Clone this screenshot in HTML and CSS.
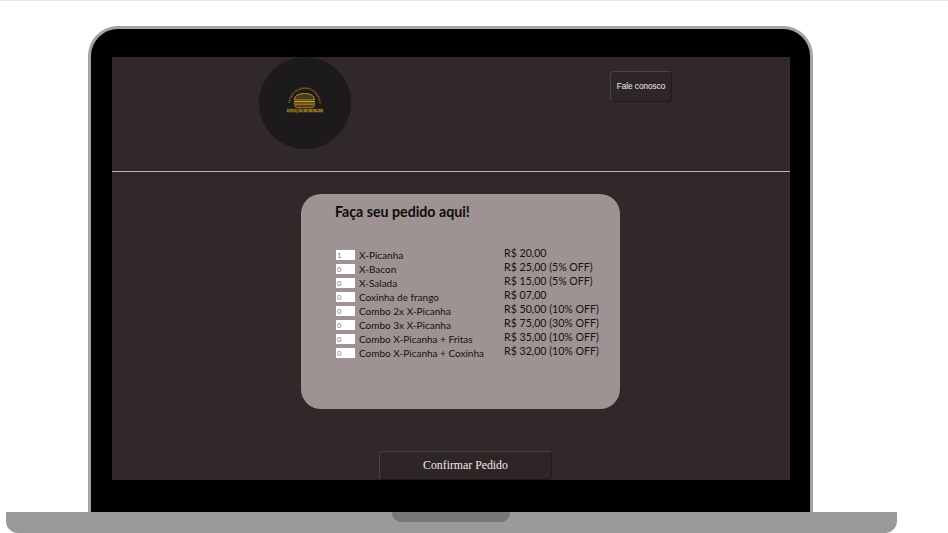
FILE: index.html
```html
<!DOCTYPE html>
<html lang="pt-BR">
<head>
<meta charset="utf-8">
<title>Faça seu pedido</title>
<link rel="stylesheet" href="styles.css">
</head>
<body>
<div class="page">
  <div class="lid">
    <div class="screen">
      <header class="topbar">
        <div class="logo">
          <svg class="logo-art" viewBox="0 0 44 30" width="44" height="30" aria-hidden="true">
            <defs><path id="arc" d="M7 17 A14.5 15 0 0 1 36 17"/></defs>
            <text class="logo-arc"><textPath href="#arc" startOffset="1">ESTAÇÃO DE BURGERS ARTESANAIS</textPath></text>
            <path d="M11.5 13 Q11.5 6.5 21.5 6.5 Q31.5 6.5 31.5 13 Z" fill="#4a3a1c" stroke="#c8962e" stroke-width="0.9"/>
            <rect x="11" y="14" width="21" height="1.4" fill="#c8962e"/>
            <rect x="10.5" y="16" width="22" height="1" fill="#7a5a1c"/>
            <path d="M11.5 17.6 H31.5 Q31.5 20.6 28.5 20.6 H14.5 Q11.5 20.6 11.5 17.6 Z" fill="#4a3a1c" stroke="#c8962e" stroke-width="0.7"/>
            <rect x="3.5" y="21.5" width="37" height="4.5" fill="#3c2e16"/>
            <text class="logo-name" x="22" y="25.2" text-anchor="middle" textLength="36" lengthAdjust="spacingAndGlyphs">ESTAÇÃO DE BURGER</text>
          </svg>
        </div>
        <button class="contact" type="button">Fale conosco</button>
      </header>
      <main class="content">
        <section class="card">
          <h1 class="title">Faça seu pedido aqui!</h1>
          <div class="order">
            <ul class="items">
              <li class="item"><input class="qty" type="text" value="1"><span>X-Picanha</span></li>
              <li class="item"><input class="qty" type="text" value="0"><span>X-Bacon</span></li>
              <li class="item"><input class="qty" type="text" value="0"><span>X-Salada</span></li>
              <li class="item"><input class="qty" type="text" value="0"><span>Coxinha de frango</span></li>
              <li class="item"><input class="qty" type="text" value="0"><span>Combo 2x X-Picanha</span></li>
              <li class="item"><input class="qty" type="text" value="0"><span>Combo 3x X-Picanha</span></li>
              <li class="item"><input class="qty" type="text" value="0"><span>Combo X-Picanha + Fritas</span></li>
              <li class="item"><input class="qty" type="text" value="0"><span>Combo X-Picanha + Coxinha</span></li>
            </ul>
            <ul class="prices">
              <li>R$ 20,00</li>
              <li>R$ 25,00 (5% OFF)</li>
              <li>R$ 15,00 (5% OFF)</li>
              <li>R$ 07,00</li>
              <li>R$ 50,00 (10% OFF)</li>
              <li>R$ 75,00 (30% OFF)</li>
              <li>R$ 35,00 (10% OFF)</li>
              <li>R$ 32,00 (10% OFF)</li>
            </ul>
          </div>
        </section>
        <button class="confirm" type="button">Confirmar Pedido</button>
      </main>
    </div>
  </div>
  <div class="base"><div class="notch"></div></div>
</div>
</body>
</html>
```
FILE: styles.css
```css
* { box-sizing: border-box; }
html, body { margin: 0; padding: 0; background: #fff; }
.page {
  width: 948px;
  height: 533px;
  overflow: hidden;
  padding-top: 25px;
  border-top: 1px solid #e6e6e6;
  display: flex;
  flex-direction: column;
}
.lid {
  width: 725px;
  height: 486px;
  margin-left: 88px;
  padding: 28px 21px 32px 21px;
  background: #000;
  border: 3px solid #a3a3a3;
  border-bottom: 0;
  border-radius: 30px 30px 0 0;
}
.screen {
  width: 678px;
  height: 423px;
  background: #312829;
  display: flex;
  flex-direction: column;
  overflow: hidden;
}
.topbar {
  height: 115px;
  flex: none;
  border-bottom: 1px solid #b9b2b2;
  display: flex;
  align-items: flex-start;
  padding-left: 147px;
}
.logo {
  width: 92px;
  height: 92px;
  flex: none;
  border-radius: 50%;
  background: #1c1a1b;
  display: flex;
  align-items: center;
  justify-content: center;
}
.logo-art { display: block; margin-top: -2px; }
.logo-arc { font: 700 2.4px "Liberation Sans", sans-serif; fill: #b98a2a; }
.logo-name { font: 700 3.6px "Liberation Serif", serif; fill: #d9a63a; }
.contact {
  width: 62px;
  height: 31px;
  margin: 14px 0 0 259px;
  padding: 0;
  flex: none;
  background: #2e2526;
  color: #f0eded;
  border: 1px solid #4d4344;
  border-bottom-color: #201a1b;
  border-right-color: #201a1b;
  border-radius: 4px;
  font: 8.2px "Liberation Sans", Arial, sans-serif;
}
.content {
  flex: 1;
  display: flex;
  flex-direction: column;
  align-items: flex-start;
}
.card {
  width: 319px;
  height: 215px;
  margin: 22px 0 0 189px;
  padding: 8px 0 0 34px;
  background: #9e9392;
  border-radius: 20px;
  color: #0c0c0c;
  font-family: "Comic Sans MS", "Lato", sans-serif;
}
.title {
  margin: 0 0 24px;
  font-size: 14.2px;
  line-height: 20px;
  font-weight: 700;
}
.order {
  display: flex;
  align-items: flex-start;
}
.items, .prices {
  list-style: none;
  margin: 0;
  padding: 0;
  line-height: 14px;
}
.items { width: 169px; margin-top: 2px; color: #141112; font-size: 10px; }
.item {
  display: flex;
  align-items: center;
  gap: 4px;
  height: 14px;
  padding-left: 1px;
  white-space: nowrap;
}
.qty {
  width: 19px;
  height: 10px;
  flex: none;
  padding: 0 0 0 1px;
  border: 0;
  background: #fff;
  color: #777;
  font: 8px "Liberation Sans", Arial, sans-serif;
}
.prices { color: #141112; white-space: nowrap; font-size: 10.6px; }
.confirm {
  width: 173px;
  height: 29px;
  margin: 42px 0 0 267px;
  padding: 0;
  flex: none;
  background: #2e2526;
  color: #eeeaea;
  border: 1px solid #4d4344;
  border-bottom-color: #201a1b;
  border-right-color: #201a1b;
  border-radius: 4px;
  font: 11.8px "Liberation Serif", "Times New Roman", serif;
}
.base {
  width: 891px;
  height: 21px;
  margin-left: 6px;
  flex: none;
  background: #9a9a9a;
  border-radius: 0 0 12px 12px;
  display: flex;
  justify-content: center;
}
.notch {
  width: 118px;
  height: 10px;
  margin-right: 1px;
  background: #777;
  border-radius: 0 0 9px 9px;
}
```
